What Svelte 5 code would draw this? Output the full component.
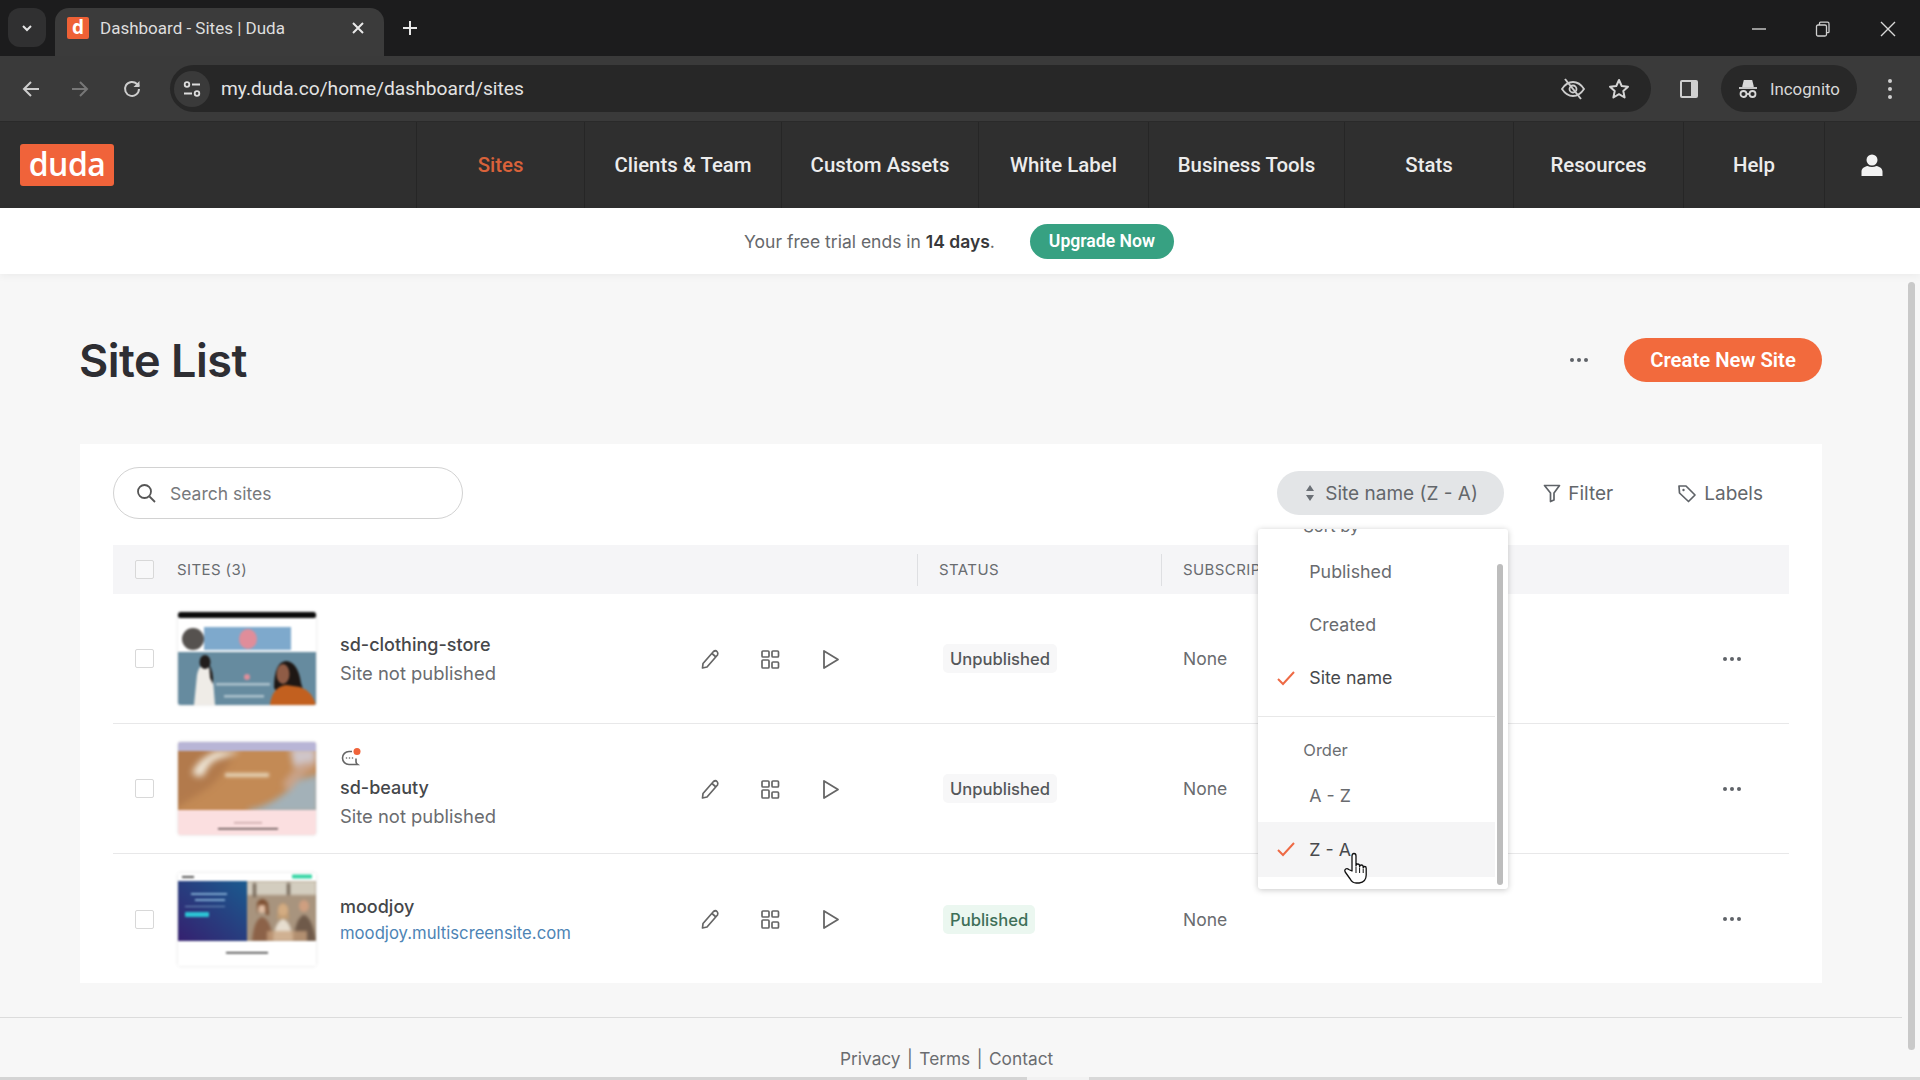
<script>
	const navItems = [
		{ label: "Sites", active: true },
		{ label: "Clients & Team" },
		{ label: "Custom Assets" },
		{ label: "White Label" },
		{ label: "Business Tools" },
		{ label: "Stats" },
		{ label: "Resources" },
		{ label: "Help" }
	];

	const sites = [
		{ name: "sd-clothing-store", sub: "Site not published", status: "Unpublished", thumb: 1 },
		{ name: "sd-beauty", sub: "Site not published", status: "Unpublished", thumb: 2, chat: true },
		{ name: "moodjoy", sub: "moodjoy.multiscreensite.com", link: true, status: "Published", thumb: 3 }
	];
</script>

<div class="screen">
	<!-- browser -->
	<div class="tabstrip">
		<div class="tabsearch">
			<svg width="14" height="14" viewBox="0 0 14 14"><path d="M3 5l4 4 4-4" fill="none" stroke="#e4e4e4" stroke-width="2"/></svg>
		</div>
		<div class="tab">
			<span class="favicon">d</span>
			<span class="tabtitle">Dashboard - Sites | Duda</span>
			<svg class="tabclose" width="14" height="14" viewBox="0 0 14 14"><path d="M2 2l10 10M12 2L2 12" stroke="#e8e8e8" stroke-width="2"/></svg>
		</div>
		<svg class="newtab" width="16" height="16" viewBox="0 0 16 16"><path d="M8 1v14M1 8h14" stroke="#e8e8e8" stroke-width="2"/></svg>
		<div class="winbtns">
			<svg width="16" height="16" viewBox="0 0 16 16"><path d="M1 8h14" stroke="#cfcfcf" stroke-width="1.4"/></svg>
			<svg width="16" height="16" viewBox="0 0 16 16" fill="none" stroke="#cfcfcf" stroke-width="1.3"><rect x="1.5" y="4" width="10" height="11" rx="1.5"/><path d="M4.5 4V2.2q0-1 1-1h7q1.500 0 1.500 1.500v8q0 1-1 1h-1.500"/></svg>
			<svg width="18" height="18" viewBox="0 0 18 18"><path d="M2 2l14 14M16 2L2 16" stroke="#d8d8d8" stroke-width="1.4"/></svg>
		</div>
	</div>

	<div class="toolbar">
		<svg class="tb back" width="22" height="22" viewBox="0 0 22 22" fill="none" stroke="#cdcdcd" stroke-width="2"><path d="M19 11H4M11 4l-7 7 7 7"/></svg>
		<svg class="tb fwd" width="22" height="22" viewBox="0 0 22 22" fill="none" stroke="#777" stroke-width="2"><path d="M3 11h15M11 4l7 7-7 7"/></svg>
		<svg class="tb reload" width="22" height="22" viewBox="0 0 22 22" fill="none" stroke="#cdcdcd" stroke-width="2"><path d="M18 11a7 7 0 1 1-2-5l2 2"/><path d="M18.500 3v6h-6" fill="#cdcdcd" stroke="none"/></svg>
		<div class="omnibox">
			<span class="siteinfo">
				<svg width="20" height="20" viewBox="0 0 20 20" fill="none" stroke="#dcdcdc" stroke-width="1.800"><circle cx="5" cy="5.500" r="2.300"/><path d="M10 5.500h8M2 14.500h8"/><circle cx="15" cy="14.500" r="2.300"/></svg>
			</span>
			<span class="url">my.duda.co/home/dashboard/sites</span>
			<svg class="omni-eye" width="26" height="24" viewBox="0 0 26 24" fill="none" stroke="#cdcdcd" stroke-width="1.800"><path d="M2 12q4.500-7 11-7t11 7q-4.500 7-11 7T2 12z"/><circle cx="13" cy="12" r="3.500"/><path d="M5 2l16 20" stroke-width="2"/></svg>
			<svg class="omni-star" width="24" height="24" viewBox="0 0 24 24" fill="none" stroke="#d4d4d4" stroke-width="2"><path d="M12 3l2.700 6 6.300.7-4.700 4.300 1.300 6.500L12 17.200 6.400 20.500l1.300-6.500L3 9.700 9.300 9z" stroke-linejoin="round"/></svg>
		</div>
		<svg class="panel" width="22" height="22" viewBox="0 0 22 22"><rect x="2" y="2" width="18" height="18" rx="2" fill="#d0d0d0"/><rect x="4" y="4" width="9" height="14" fill="#3a3a3a"/></svg>
		<div class="incognito">
			<svg width="24" height="24" viewBox="0 0 24 24" fill="none" stroke="#d8d8d8" stroke-width="1.800"><path d="M7 10l1.500-6h7L17 10" fill="#d8d8d8"/><path d="M3 11h18"/><circle cx="7.500" cy="17" r="3"/><circle cx="16.500" cy="17" r="3"/><path d="M10.500 17h3"/></svg>
			<span>Incognito</span>
		</div>
		<span class="kebab"><i></i><i></i><i></i></span>
	</div>

	<!-- app nav -->
	<nav class="appnav">
		<div class="logo-cell"><span class="logo">duda</span></div>
		{#each navItems as item}
			<a class="navitem" class:active={item.active}>{item.label}</a>
		{/each}
		<div class="navuser">
			<svg width="24" height="24" viewBox="0 0 24 24" fill="#f2f2f2"><circle cx="12" cy="7" r="5.500"/><path d="M1.500 23v-4.500c0-3 3-5 6-5.500q4.500 2 9 0c3 .5 6 2.500 6 5.500V23z"/></svg>
		</div>
	</nav>

	<div class="trial">
		<span class="trialtext">Your free trial ends in <b>14 days</b>.</span>
		<button class="upgrade">Upgrade Now</button>
	</div>

	<main class="content">
		<div class="titlerow">
			<h1>Site List</h1>
			<span class="moredots title-dots"><i></i><i></i><i></i></span>
			<button class="create">Create New Site</button>
		</div>

		<section class="card">
			<div class="filters">
				<div class="search">
					<svg width="22" height="22" viewBox="0 0 22 22" fill="none" stroke="#555" stroke-width="1.800"><circle cx="9.500" cy="9.500" r="6.500"/><path d="M14.500 14.500l5.500 5.500"/></svg>
					<span>Search sites</span>
				</div>
				<div class="sortwrap">
					<div class="sortpill">
						<svg width="12" height="18" viewBox="0 0 12 18" fill="#6b7076"><path d="M6 1l4 6H2zM6 17l-4-6h8z"/></svg>
						<span>Site name (Z - A)</span>
					</div>
					<div class="menu">
						<div class="menulabel sortby">Sort by</div>
						<div class="menuitem">Published</div>
						<div class="menuitem">Created</div>
						<div class="menuitem on">
							<svg class="check" width="20" height="16" viewBox="0 0 20 16" fill="none" stroke="#ee6a45" stroke-width="2"><path d="M2 9l5 5L18 2"/></svg>
							Site name
						</div>
						<hr />
						<div class="menulabel order">Order</div>
						<div class="menuitem">A - Z</div>
						<div class="menuitem on hover">
							<svg class="check" width="20" height="16" viewBox="0 0 20 16" fill="none" stroke="#ee6a45" stroke-width="2"><path d="M2 9l5 5L18 2"/></svg>
							Z - A
						</div>
						<span class="menuscroll"></span>
					</div>
				</div>
				<div class="tool filter">
					<svg width="18" height="20" viewBox="0 0 18 20" fill="none" stroke="#5f6368" stroke-width="1.700"><path d="M1.500 2.500h15L11 10v7l-3.500 1.500V10z" stroke-linejoin="round"/></svg>
					<span>Filter</span>
				</div>
				<div class="tool labels">
					<svg width="20" height="20" viewBox="0 0 20 20" fill="none" stroke="#5f6368" stroke-width="1.700"><path d="M2 3h7l9 9-6.500 6.500L2.500 10z" stroke-linejoin="round"/><circle cx="6.500" cy="7" r="1.200" fill="#5f6368" stroke="none"/></svg>
					<span>Labels</span>
				</div>
			</div>

			<div class="thead">
				<div class="cb-cell"><span class="checkbox"></span></div>
				<div class="th first">SITES (3)</div>
				<div class="th">STATUS</div>
				<div class="th">SUBSCRIPTION</div>
			</div>

			{#each sites as site}
				<div class="row">
					<div class="cb-cell"><span class="checkbox"></span></div>
					<div class="thumbcell">
						<svg class="thumb" viewBox="0 0 138 93" preserveAspectRatio="none">
							{#if site.thumb === 1}
								<rect width="138" height="93" fill="#fff"/>
								<rect width="138" height="6" rx="2" fill="#0b0b0b"/>
								<rect x="26" y="15" width="87" height="23" fill="#7ea9cc"/>
								<circle cx="15" cy="27" r="11" fill="#56524f"/>
								<ellipse cx="70" cy="27" rx="9" ry="10" fill="#e08d9a"/>
								<rect y="40" width="138" height="53" fill="#668b9f"/>
								<path d="M16 93l3-30q2-10 7-10 8 2 9 14l2 26z" fill="#efece7"/>
								<ellipse cx="27" cy="50" rx="5.500" ry="7" fill="#211d1c"/>
								<path d="M31 52q5 8 4 20l-3-6z" fill="#211d1c"/>
								<rect x="38" y="71" width="54" height="2.500" fill="#aec3ce"/>
								<rect x="46" y="83" width="40" height="2.500" fill="#aec3ce"/>
								<circle cx="69" cy="65" r="3" fill="#dd8f9b"/>
								<path d="M96 76q0-26 12-27 12 1 15 22l6 20h-20z" fill="#1e1714"/>
								<ellipse cx="105" cy="62" rx="6.500" ry="10" fill="#8f5c46"/>
								<path d="M92 93q2-18 16-20l14 2q12 4 16 18z" fill="#c2601f"/>
							{:else if site.thumb === 2}
								<rect width="138" height="93" fill="#fbdfe0"/>
								<rect width="138" height="9" fill="#b8b5d6"/>
								<svg x="0" y="9" width="138" height="59" viewBox="0 0 138 59">
									<rect width="138" height="59" fill="#c38a55"/>
									<g class="soft">
										<path d="M-5 -5h60v10q-10 20-25 32l-35 22z" fill="#b27a4c"/>
										<path d="M14 22q6-14 24-22h24q-12 6-22 8-10 4-14 16-6 4-12-2z" fill="#efe7d8"/>
										<path d="M70 59q30-6 50-30l22-6v40H70z" fill="#a3b1b8"/>
										<path d="M104 34q10-18 34-30v12q-14 6-26 24z" fill="#c9a288"/>
										<path d="M112 -3l26 0v14q-16 0-22 6z" fill="#cfc6ca"/>
									</g>
									<rect x="47" y="22" width="44" height="4" fill="#e6d4b8" class="softer"/>
								</svg>
								<rect x="56" y="80" width="28" height="1.500" fill="#c9a7a8"/>
								<rect x="40" y="86" width="60" height="1.500" fill="#5b4a4a"/>
							{:else}
								<rect width="138" height="93" fill="#fff"/>
								<rect x="4" y="3" width="12" height="2" fill="#555"/>
								<rect x="114" y="1.500" width="20" height="4" rx="1" fill="#36d6a5"/>
								<defs><linearGradient id="moodgrad" x1="0" y1="1" x2="1" y2="0"><stop offset="0" stop-color="#35206f"/><stop offset="1" stop-color="#1a5b8f"/></linearGradient></defs>
								<rect y="8" width="69" height="60" fill="url(#moodgrad)"/>
								<rect x="13" y="20" width="36" height="2" fill="#7fa8d0"/>
								<rect x="17" y="26" width="30" height="2" fill="#7fa8d0"/>
								<rect x="7" y="33" width="40" height="1" fill="#6f90ba"/>
								<rect x="7" y="39" width="24" height="5" rx="1" fill="#2cc3d4"/>
								<svg x="69" y="8" width="69" height="60" viewBox="0 0 69 60">
									<rect width="69" height="60" fill="#a8947e"/>
									<g class="soft-sm">
										<rect width="69" height="14" fill="#d3cdbf"/>
										<rect x="6" y="2" width="3" height="14" fill="#6d5f50"/>
										<rect x="40" y="2" width="3" height="12" fill="#6d5f50"/>
										<ellipse cx="15" cy="26" rx="5" ry="6" fill="#e0bda3"/>
										<path d="M10 22q5-8 11 0l1 12h-3l-1-10h-6l-2 10z" fill="#7d4f32"/>
										<path d="M5 60q2-22 10-24 9 2 11 24z" fill="#8c6248"/>
										<ellipse cx="36" cy="29" rx="5" ry="6" fill="#e7c9ae"/>
										<path d="M31 26q5-8 10 0l1 12h-12z" fill="#caa06f" opacity=".7"/>
										<path d="M26 60q2-20 10-22 8 2 10 22z" fill="#e6ddcf"/>
										<ellipse cx="57" cy="25" rx="5" ry="6" fill="#cf9f80"/>
										<path d="M46 60q3-24 11-26 8 2 12 26z" fill="#6f5a4a"/>
										<rect x="20" y="50" width="40" height="10" fill="#c8a27e" opacity=".75"/>
									</g>
								</svg>
								<rect x="48" y="79" width="42" height="1.500" fill="#333"/>
							{/if}
						</svg>
					</div>
					<div class="namecell">
						{#if site.chat}
							<svg class="chat" width="22" height="22" viewBox="0 0 22 22" fill="none" stroke="#666" stroke-width="1.600"><path d="M12 4.500H9a6.500 6.500 0 0 0 0 13h8.500q-1.500-1-1.500-3v-3"/><circle cx="6.500" cy="11" r=".8" fill="#666" stroke="none"/><circle cx="9.500" cy="11" r=".8" fill="#666" stroke="none"/><circle cx="12.500" cy="11" r=".8" fill="#666" stroke="none"/><circle cx="17" cy="4.500" r="3.500" fill="#f0633a" stroke="none"/></svg>
						{/if}
						<div class="sitename">{site.name}</div>
						<div class="sitesub" class:link={site.link}>{site.sub}</div>
					</div>
					<div class="actions">
						<svg width="24" height="24" viewBox="0 0 24 24" fill="none" stroke="#666" stroke-width="1.700"><path d="M5 16.500L15.500 4.500q2-1.500 3.500 0t.5 3.500L9 20l-4.500 1z" stroke-linejoin="round"/><path d="M14 6.500l4 3.500"/></svg>
						<svg width="24" height="24" viewBox="0 0 24 24" fill="none" stroke="#666" stroke-width="1.700"><rect x="4" y="4" width="7" height="6" rx="1"/><rect x="14" y="4" width="6.500" height="6" rx="1"/><rect x="4" y="13" width="7" height="8" rx="1"/><rect x="14" y="15" width="6.500" height="6" rx="1"/></svg>
						<svg width="24" height="24" viewBox="0 0 24 24" fill="none" stroke="#666" stroke-width="1.800"><path d="M6 4l14 8.500L6 21z" stroke-linejoin="round"/></svg>
					</div>
					<div class="statuscell">
						<span class="status" class:published={site.status === "Published"}>{site.status}</span>
					</div>
					<div class="subcell">None</div>
					<div class="rowmore"><span class="moredots"><i></i><i></i><i></i></span></div>
				</div>
			{/each}
		</section>

		<footer class="foot">
			<a>Privacy</a><span>|</span><a>Terms</a><span>|</span><a>Contact</a>
		</footer>
	</main>

	<span class="pagescroll"></span>
	<span class="bottomstrip"></span>

	<!-- pointer over Z - A -->
	<svg class="hand" width="24" height="34" viewBox="0 0 24 34"><path d="M8 20V5q0-2.500 2-2.500t2 2.500v10q0-2 1.800-2t1.800 2v1q0-2 1.800-2t1.800 2v1q0-1.500 1.500-1.500t1.500 1.800V24q0 7-7 8h-3q-4 0-6-4l-5-7q-1-2 .5-3t3 .5z" fill="#fff" stroke="#111" stroke-width="1.300" stroke-linejoin="round"/><path d="M12 16v6M15.600 17v5M19.200 18v4" stroke="#111" stroke-width="1"/></svg>
</div>

<style>
	:global(body) {
		margin: 0;
		background: #f7f7f7;
	}
	.screen {
		position: relative;
		width: 1920px;
		height: 1080px;
		overflow: hidden;
		font-family: Inter, "Liberation Sans", sans-serif;
		color: #3a3a3c;
	}

	/* browser chrome */
	.tabstrip {
		height: 56px;
		background: #1c1c1d;
		display: flex;
		align-items: flex-end;
	}
	.tabsearch {
		width: 38px;
		height: 39px;
		margin: 0 9px 9px 8px;
		background: #303031;
		border-radius: 12px;
		display: flex;
		align-items: center;
		justify-content: center;
	}
	.tab {
		width: 329px;
		height: 48px;
		background: #3b3b3b;
		border-radius: 14px 14px 0 0;
		display: flex;
		align-items: center;
		padding: 0 19px 8px 12px;
		box-sizing: border-box;
	}
	.favicon {
		width: 22px;
		height: 22px;
		background: #ee6136;
		border-radius: 2px;
		color: #fff;
		font: 700 19px/21px "Open Sans", sans-serif;
		text-align: center;
	}
	.tabtitle {
		margin-left: 11px;
		flex: 1;
		color: #dedede;
		font: 400 17px "Roboto", sans-serif;
	}
	.newtab {
		margin: 0 0 20px 18px;
	}
	.winbtns {
		margin-left: auto;
		align-self: center;
		display: flex;
		align-items: center;
		gap: 48px;
		padding-right: 23px;
		margin-top: 2px;
	}
	.toolbar {
		height: 66px;
		background: #3a3a3a;
		display: flex;
		align-items: center;
		box-sizing: border-box;
		border-bottom: 1px solid #2a2a2a;
	}
	.tb {
		flex: none;
	}
	.back {
		margin-left: 20px;
	}
	.fwd {
		margin-left: 27px;
	}
	.reload {
		margin-left: 30px;
	}
	.omnibox {
		margin-left: 27px;
		width: 1481px;
		height: 47px;
		background: #272727;
		border-radius: 24px;
		display: flex;
		align-items: center;
		padding-left: 4px;
		box-sizing: border-box;
	}
	.siteinfo {
		width: 36px;
		height: 36px;
		border-radius: 50%;
		background: #3a3a3a;
		display: flex;
		align-items: center;
		justify-content: center;
	}
	.url {
		margin-left: 11px;
		flex: 1;
		color: #e3e3e3;
		font: 400 19.200px "Roboto", sans-serif;
	}
	.omni-eye {
		margin-right: 21px;
	}
	.omni-star {
		margin-right: 20px;
	}
	.panel {
		margin-left: 27px;
		margin-right: 21px;
	}
	.incognito {
		width: 136px;
		height: 47px;
		background: #282828;
		border-radius: 24px;
		display: flex;
		align-items: center;
		gap: 10px;
		padding-left: 15px;
		box-sizing: border-box;
		color: #d8d8d8;
		font: 400 16.800px "Roboto", sans-serif;
	}
	.kebab {
		margin-left: 31px;
		display: flex;
		flex-direction: column;
		gap: 4px;
	}
	.kebab i {
		width: 4px;
		height: 4px;
		border-radius: 50%;
		background: #cfcfcf;
	}

	/* app nav */
	.appnav {
		height: 86px;
		background: #2f2f2f;
		display: grid;
		grid-template-columns: 416px 168px 197px 197px 170px 196px 169px 170px 141px 1fr;
	}
	.logo-cell {
		display: flex;
		align-items: center;
		padding-left: 20px;
	}
	.logo {
		width: 94px;
		height: 42px;
		background: #f0633a;
		border-radius: 3px;
		color: #fff;
		font: 600 32px/40px "Open Sans", sans-serif;
		text-align: center;
		letter-spacing: -0.5px;
	}
	.navitem {
		border-left: 1px solid #262626;
		display: flex;
		align-items: center;
		justify-content: center;
		color: #ececec;
		font: 500 20.400px "Roboto", sans-serif;
	}
	.navitem.active {
		color: #d9623a;
	}
	.navuser {
		border-left: 1px solid #262626;
		display: flex;
		align-items: center;
		justify-content: center;
		padding-right: 2px;
	}

	.trial {
		height: 66px;
		background: #fff;
		box-shadow: 0 2px 8px rgba(0, 0, 0, 0.05);
		display: flex;
		align-items: center;
		justify-content: center;
		gap: 35px;
		padding-right: 2px;
		position: relative;
		font-size: 17.500px;
		color: #66686b;
	}
	.trial b {
		font-weight: 600;
		color: #38383a;
	}
	.upgrade {
		width: 144px;
		height: 35px;
		border: 0;
		border-radius: 18px;
		background: #37a182;
		color: #fff;
		font: 600 17.600px "Roboto", sans-serif;
		padding: 0;
	}

	/* page */
	.content {
		height: 806px;
		box-sizing: border-box;
		padding-top: 64px;
	}
	.titlerow {
		display: flex;
		align-items: center;
		height: 44px;
		margin: 0 98px 62px 79px;
	}
	h1 {
		margin: 0;
		font-size: 45px;
		font-weight: 600;
		color: #2e2e33;
		letter-spacing: -0.5px;
	}
	.moredots {
		display: inline-flex;
		gap: 3px;
	}
	.moredots i {
		width: 4px;
		height: 4px;
		border-radius: 50%;
		background: #5f6368;
	}
	.title-dots {
		margin-left: auto;
		margin-right: 36px;
	}
	.create {
		width: 198px;
		height: 44px;
		border: 0;
		border-radius: 22px;
		background: #f26a3d;
		color: #fff;
		font: 600 20.300px Roboto, sans-serif;
		padding: 0;
	}
	.card {
		margin: 0 98px 34px 80px;
		height: 539px;
		box-sizing: border-box;
		background: #fff;
		padding: 0 33px;
	}
	.filters {
		height: 101px;
		padding: 23px 26px 26px 0;
		box-sizing: border-box;
		display: flex;
		align-items: center;
		font-size: 19px;
		color: #63676b;
	}
	.search {
		width: 350px;
		height: 52px;
		box-sizing: border-box;
		border: 1px solid #d2d2d2;
		border-radius: 26px;
		display: flex;
		align-items: center;
		gap: 13px;
		padding-left: 21px;
		font-size: 17.500px;
		color: #77797c;
	}
	.sortwrap {
		margin-left: auto;
		position: relative;
	}
	.sortpill {
		width: 227px;
		height: 44px;
		box-sizing: border-box;
		border-radius: 22px;
		background: #e3e5e7;
		display: flex;
		align-items: center;
		gap: 9px;
		padding-left: 27px;
		white-space: nowrap;
	}
	.tool {
		display: flex;
		align-items: center;
		gap: 7px;
	}
	.filter {
		margin-left: 39px;
	}
	.labels {
		margin-left: 64px;
	}

	.menu {
		position: absolute;
		top: 58px;
		left: -19px;
		width: 250px;
		height: 360px;
		overflow: hidden;
		background: #fff;
		border-radius: 3px;
		box-shadow: 0 1px 6px rgba(0, 0, 0, 0.22);
		z-index: 5;
		font-size: 17.800px;
	}
	.menulabel {
		padding-left: 45px;
		line-height: 20px;
		font-size: 16.500px;
		color: #6b6e72;
	}
	.sortby {
		margin-top: -13px;
		margin-bottom: 9px;
	}
	.menuitem {
		position: relative;
		width: 237px;
		height: 53px;
		line-height: 53px;
		padding-left: 51px;
		box-sizing: border-box;
		color: #696b6f;
	}
	.menuitem.on {
		color: #47494c;
	}
	.menuitem.hover {
		height: 55px;
		line-height: 55px;
		background: #f5f5f6;
	}
	.check {
		position: absolute;
		left: 18px;
		top: 19px;
	}
	hr {
		width: 237px;
		margin: 12px 0 0;
		border: 0;
		border-top: 1px solid #e8e8e8;
	}
	.order {
		margin-top: 23px;
		margin-bottom: 9px;
	}
	.menuscroll {
		position: absolute;
		left: 239px;
		top: 35px;
		width: 6px;
		height: 321px;
		border-radius: 3px;
		background: #bdbdbd;
	}

	.thead {
		height: 49px;
		background: #f5f5f7;
		display: grid;
		grid-template-columns: 64px 740px 244px 1fr;
		align-items: center;
		font-size: 15px;
		letter-spacing: 0.4px;
		color: #696c70;
	}
	.th {
		height: 32px;
		line-height: 32px;
		border-left: 1px solid #dedfe2;
		padding-left: 21px;
		white-space: nowrap;
		overflow: hidden;
	}
	.th.first {
		border-left: 0;
		padding-left: 0;
	}
	.cb-cell {
		display: flex;
		padding-left: 22px;
	}
	.checkbox {
		width: 19px;
		height: 19px;
		box-sizing: border-box;
		border: 1px solid #d8d8d8;
		border-radius: 2px;
		background: #fff;
	}
	.thead .checkbox {
		background: #f8f8f9;
	}
	.row {
		height: 130px;
		box-sizing: border-box;
		border-bottom: 1px solid #e8e8e9;
		display: grid;
		grid-template-columns: 64px 163px 358px 245px 240px 1fr 114px;
		align-items: center;
	}
	.row:last-child {
		border-bottom: 0;
	}
	.thumbcell {
		padding-left: 1px;
	}
	.thumb {
		display: block;
		width: 138px;
		height: 93px;
		border-radius: 2px;
		box-shadow: 0 0 3px rgba(0, 0, 0, 0.15);
		filter: blur(0.8px);
	}
	.soft {
		filter: blur(3px);
	}
	.soft-sm {
		filter: blur(1px);
	}
	.softer {
		filter: blur(1.5px);
	}
	.namecell {
		display: flex;
		flex-direction: column;
	}
	.chat {
		margin-bottom: 5px;
		margin-top: -1px;
	}
	.sitename {
		line-height: 28px;
		font-size: 18px;
		font-weight: 500;
		color: #45474a;
	}
	.sitesub {
		line-height: 28px;
		font-size: 18.400px;
		color: #6a6c6f;
	}
	.sitesub.link {
		line-height: 24px;
		font-size: 16.700px;
		color: #4d84b5;
	}
	.actions {
		display: flex;
		gap: 36px;
	}
	.status {
		display: inline-block;
		height: 29px;
		line-height: 30px;
		padding: 0 7px;
		border-radius: 5px;
		background: #f7f7f8;
		font-size: 16.600px;
		font-weight: 500;
		color: #55575a;
	}
	.status.published {
		background: #ebf7f0;
		color: #3e6f58;
	}
	.subcell {
		font-size: 17.500px;
		color: #6a6c6f;
	}
	.rowmore {
		display: flex;
		justify-content: center;
	}
	.foot {
		height: 63px;
		width: 1902px;
		box-sizing: border-box;
		border-top: 1px solid #dcdcdc;
		padding: 28px 0 0 840px;
		display: flex;
		gap: 6.500px;
		line-height: 26px;
		font-size: 17.300px;
		color: #6a6c6f;
	}

	.pagescroll {
		position: absolute;
		left: 1908px;
		top: 282px;
		width: 7px;
		height: 768px;
		border-radius: 4px;
		background: #c9c9c9;
	}
	.bottomstrip {
		position: absolute;
		left: 0;
		right: 0;
		bottom: 0;
		height: 3px;
		background: linear-gradient(90deg, #d4d4d4 1027px, #f2f2f2 1027px, #f2f2f2 1089px, #d8d8d8 1089px);
	}
	.hand {
		position: absolute;
		left: 1344px;
		top: 851px;
		z-index: 9;
	}
</style>
